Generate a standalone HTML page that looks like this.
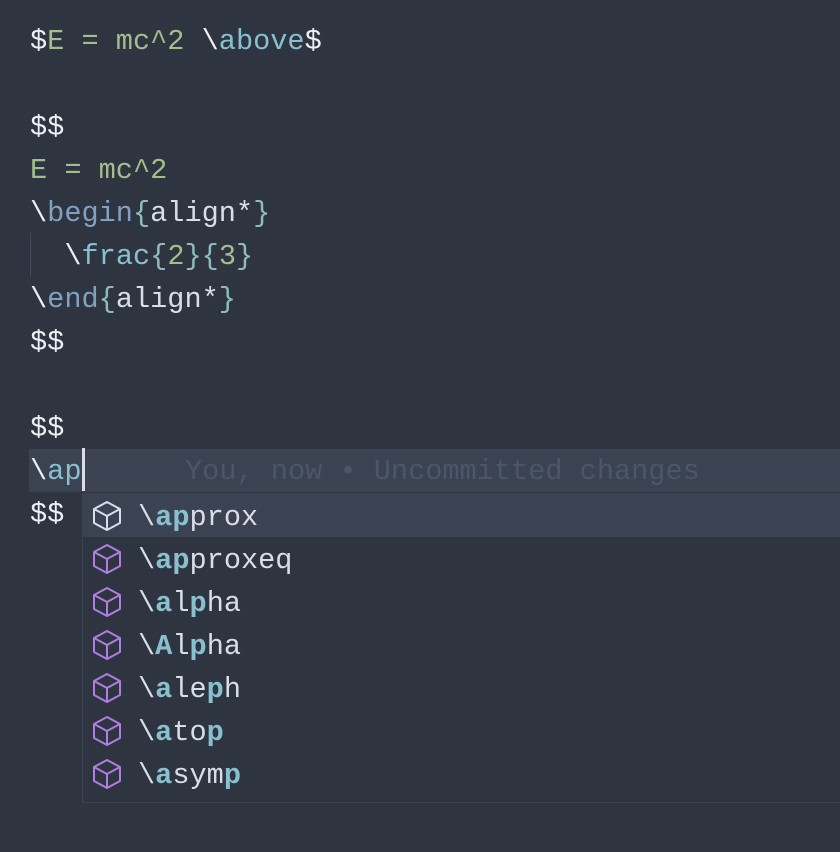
<!DOCTYPE html>
<html><head><style>
body{margin:0;width:840px;height:852px;background:#2e3440;overflow:hidden;position:relative;font-family:"Liberation Mono","DejaVu Sans Mono",monospace;font-size:28.6px;color:#d8dee9}
.l{position:absolute;left:30px;height:43px;line-height:47px;white-space:pre}
.w{color:#eceff4}.g{color:#a3be8c}.c{color:#88c0d0}.b{color:#81a1c1}.t{color:#8fbcbb}
.cur{position:absolute;left:29px;top:449px;width:811px;height:43px;background:#3b4252}
#wd{position:absolute;left:82px;top:493px;width:770px;height:308px;border:1px solid #3b4252;background:#2e3440}
.r{position:absolute;left:0;width:770px;height:43px;line-height:47px;white-space:pre}
.r svg{position:absolute;left:8px;top:6px}
.r span.x{position:absolute;left:55px}
.m{color:#88c0d0;font-weight:bold}
</style></head><body>
<div class="l w" style="top:18px">$<span class="g">E = mc^2 </span><span class="w">\</span><span class="c">above</span>$</div>
<div class="l w" style="top:104px">$$</div>
<div class="l g" style="top:147px">E = mc^2</div>
<div class="l" style="top:190px"><span class="w">\</span><span class="b">begin</span><span class="t">{</span>align*<span class="t">}</span></div>
<div style="position:absolute;left:30px;top:233px;width:1px;height:43px;background:#434c5e"></div>
<div class="l" style="top:233px">  <span class="w">\</span><span class="c">frac</span><span class="t">{</span><span class="g">2</span><span class="t">}{</span><span class="g">3</span><span class="t">}</span></div>
<div class="l" style="top:276px"><span class="w">\</span><span class="b">end</span><span class="t">{</span>align*<span class="t">}</span></div>
<div class="l w" style="top:319px">$$</div>
<div class="l w" style="top:405px">$$</div>
<div class="cur"></div>
<div class="l" style="top:448px"><span class="w">\</span><span class="c">ap</span></div>
<div style="position:absolute;left:82px;top:448px;width:3px;height:43px;background:#d8dee9"></div>
<div class="l" style="top:448px;left:185px;color:#4c566a">You, now • Uncommitted changes</div>
<div class="l w" style="top:491px">$$</div>
<div id="wd">
<div class="r" style="top:0;background:#3b4252"><svg width="32" height="32" viewBox="0 0 32 32" fill="none" stroke="#d8dee9" stroke-width="2" stroke-linejoin="round"><path d="M16 2L29 9V23L16 30L3 23V9Z"/><path d="M3 9L16 16L29 9M16 16V30"/></svg><span class="x">\<span class="m">ap</span>prox</span></div>
<div class="r" style="top:43px"><svg width="32" height="32" viewBox="0 0 32 32" fill="none" stroke="#b07ee0" stroke-width="2" stroke-linejoin="round"><path d="M16 2L29 9V23L16 30L3 23V9Z"/><path d="M3 9L16 16L29 9M16 16V30"/></svg><span class="x">\<span class="m">ap</span>proxeq</span></div>
<div class="r" style="top:86px"><svg width="32" height="32" viewBox="0 0 32 32" fill="none" stroke="#b07ee0" stroke-width="2" stroke-linejoin="round"><path d="M16 2L29 9V23L16 30L3 23V9Z"/><path d="M3 9L16 16L29 9M16 16V30"/></svg><span class="x">\<span class="m">a</span>l<span class="m">p</span>ha</span></div>
<div class="r" style="top:129px"><svg width="32" height="32" viewBox="0 0 32 32" fill="none" stroke="#b07ee0" stroke-width="2" stroke-linejoin="round"><path d="M16 2L29 9V23L16 30L3 23V9Z"/><path d="M3 9L16 16L29 9M16 16V30"/></svg><span class="x">\<span class="m">A</span>l<span class="m">p</span>ha</span></div>
<div class="r" style="top:172px"><svg width="32" height="32" viewBox="0 0 32 32" fill="none" stroke="#b07ee0" stroke-width="2" stroke-linejoin="round"><path d="M16 2L29 9V23L16 30L3 23V9Z"/><path d="M3 9L16 16L29 9M16 16V30"/></svg><span class="x">\<span class="m">a</span>le<span class="m">p</span>h</span></div>
<div class="r" style="top:215px"><svg width="32" height="32" viewBox="0 0 32 32" fill="none" stroke="#b07ee0" stroke-width="2" stroke-linejoin="round"><path d="M16 2L29 9V23L16 30L3 23V9Z"/><path d="M3 9L16 16L29 9M16 16V30"/></svg><span class="x">\<span class="m">a</span>to<span class="m">p</span></span></div>
<div class="r" style="top:258px"><svg width="32" height="32" viewBox="0 0 32 32" fill="none" stroke="#b07ee0" stroke-width="2" stroke-linejoin="round"><path d="M16 2L29 9V23L16 30L3 23V9Z"/><path d="M3 9L16 16L29 9M16 16V30"/></svg><span class="x">\<span class="m">a</span>sym<span class="m">p</span></span></div>
</div>
</body></html>
